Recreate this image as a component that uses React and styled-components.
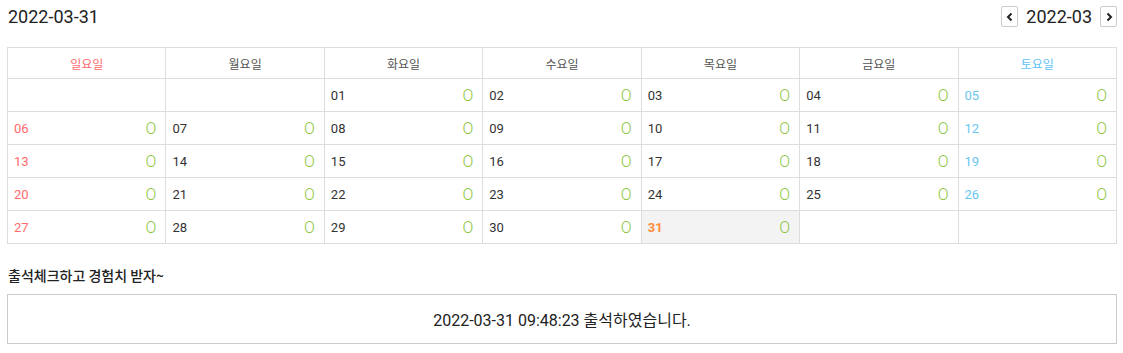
import React from "react";
import styled, { createGlobalStyle } from "styled-components";

const GlobalStyle = createGlobalStyle`
    body {
        margin: 0;
        background: #fff;
        font-family: Roboto, "Noto Sans CJK KR", sans-serif;
        color: #333;
    }
`;

const Page = styled.div`
    padding: 0 6px 0 7px;
`;

const TopBar = styled.div`
    display: flex;
    justify-content: space-between;
    align-items: center;
    height: 33px;
`;

const Today = styled.div`
    font-size: 18px;
    color: #222;
    padding-left: 1px;
`;

const MonthNav = styled.div`
    display: flex;
    align-items: center;
    gap: 8px;
`;

const NavButton = styled.button`
    width: 17px;
    height: 21px;
    padding: 0;
    border: 1px solid #ccc;
    border-radius: 2px;
    background: #fff;
    display: flex;
    align-items: center;
    justify-content: center;
    cursor: pointer;
`;

const Month = styled.div`
    font-size: 18px;
    color: #222;
`;

const Calendar = styled.div`
    margin-top: 14px;
    display: grid;
    grid-template-columns: repeat(7, 1fr);
    border-top: 1px solid #ddd;
    border-left: 1px solid #ddd;
`;

const Head = styled.div`
    height: 30px;
    display: flex;
    align-items: center;
    justify-content: center;
    font-size: 12px;
    font-family: "Noto Sans CJK KR", sans-serif;
    color: ${({ $tone }) => ($tone === "sun" ? "#ff6b6b" : $tone === "sat" ? "#5ec2f2" : "#555")};
    border-right: 1px solid #ddd;
    border-bottom: 1px solid #ddd;
`;

const Cell = styled.div`
    height: 32px;
    display: flex;
    align-items: center;
    justify-content: space-between;
    padding: 0 9px 0 6px;
    background: ${({ $today }) => ($today ? "#f3f3f3" : "#fff")};
    border-right: 1px solid #ddd;
    border-bottom: 1px solid #ddd;
`;

const DayNum = styled.span`
    font-size: 13px;
    font-weight: ${({ $today }) => ($today ? 700 : 400)};
    color: ${({ $tone, $today }) =>
        $today ? "#ff8c3a" : $tone === "sun" ? "#ff6b6b" : $tone === "sat" ? "#6cc6f0" : "#333"};
`;

const Mark = styled.span`
    font-size: 16px;
    font-weight: 300;
    color: #8cc63f;
`;

const SubTitle = styled.div`
    margin-top: 21px;
    font-size: 14px;
    line-height: 20px;
    font-weight: 500;
    font-family: "Noto Sans CJK KR", sans-serif;
    color: #222;
    padding-left: 1px;
`;

const Notice = styled.div`
    margin-top: 9px;
    height: 48px;
    border: 1px solid #ccc;
    display: flex;
    align-items: center;
    justify-content: center;
    font-size: 16px;
    color: #222;
    font-family: Roboto, "Noto Sans CJK KR", sans-serif;
`;

const heads = [
    { label: "일요일", tone: "sun" },
    { label: "월요일" },
    { label: "화요일" },
    { label: "수요일" },
    { label: "목요일" },
    { label: "금요일" },
    { label: "토요일", tone: "sat" },
];

const Chevron = ({ dir }) => (
    <svg width="8" height="10" viewBox="0 0 8 10">
        <path
            d={dir === "left" ? "M5.5 1.5 L2 5 L5.5 8.5" : "M2.5 1.5 L6 5 L2.5 8.5"}
            fill="none"
            stroke="#222"
            strokeWidth="2"
        />
    </svg>
);

export default function App() {
    const cells = [];
    for (let i = 0; i < 35; i++) {
        const day = i - 1;
        cells.push(day >= 1 && day <= 31 ? day : null);
    }

    return (
        <Page>
            <GlobalStyle />
            <TopBar>
                <Today>2022-03-31</Today>
                <MonthNav>
                    <NavButton><Chevron dir="left" /></NavButton>
                    <Month>2022-03</Month>
                    <NavButton><Chevron dir="right" /></NavButton>
                </MonthNav>
            </TopBar>
            <Calendar>
                {heads.map((h) => (
                    <Head key={h.label} $tone={h.tone}>{h.label}</Head>
                ))}
                {cells.map((day, i) => {
                    const tone = i % 7 === 0 ? "sun" : i % 7 === 6 ? "sat" : undefined;
                    const today = day === 31;
                    return (
                        <Cell key={i} $today={today}>
                            {day && (
                                <>
                                    <DayNum $tone={tone} $today={today}>
                                        {String(day).padStart(2, "0")}
                                    </DayNum>
                                    <Mark>O</Mark>
                                </>
                            )}
                        </Cell>
                    );
                })}
            </Calendar>
            <SubTitle>출석체크하고 경험치 받자~</SubTitle>
            <Notice>2022-03-31 09:48:23 출석하였습니다.</Notice>
        </Page>
    );
}
